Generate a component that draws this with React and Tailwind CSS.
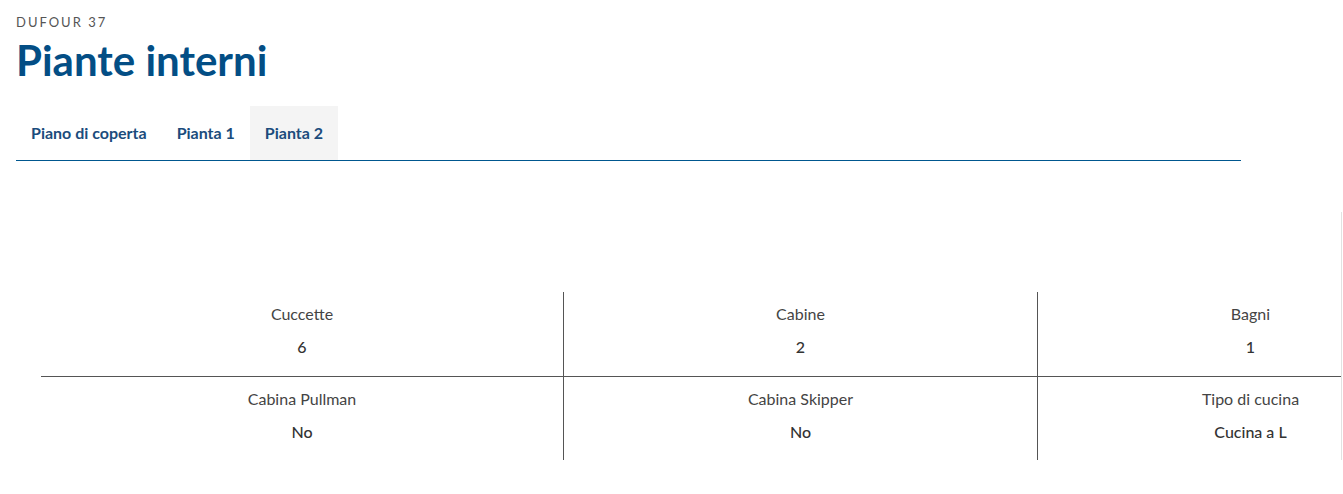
import React from "react";

const specs = [
  [
    { label: "Cuccette", value: "6" },
    { label: "Cabine", value: "2" },
    { label: "Bagni", value: "1" },
  ],
  [
    { label: "Cabina Pullman", value: "No" },
    { label: "Cabina Skipper", value: "No" },
    { label: "Tipo di cucina", value: "Cucina a L" },
  ],
];

const colWidths = ["w-[522px]", "w-[474px]", "w-[426px]"];

export default function App() {
  return (
    <div className="bg-white min-h-[494px] font-['Lato','Open_Sans',sans-serif] overflow-hidden">
      {/* Header */}
      <div className="px-4 pt-[14px]">
        <p className="text-[13px] leading-4 tracking-[2px] text-[#555]">DUFOUR 37</p>
        <h1 className="mt-[6px] text-[42px] leading-[48px] font-bold text-[#034e85]">Piante interni</h1>
      </div>

      {/* Tabs */}
      <div className="ml-4 mt-[22px] w-[1225px] flex border-b border-[#00578f]">
        <button className="h-[54px] px-[15px] text-[16px] font-bold text-[#1b4c7c]">Piano di coperta</button>
        <button className="h-[54px] px-[15px] text-[16px] font-bold text-[#1b4c7c]">Pianta 1</button>
        <button className="h-[54px] px-[15px] text-[16px] font-bold text-[#1b4c7c] bg-[#f4f4f4]">Pianta 2</button>
      </div>

      {/* Specs */}
      <div className="mt-[51px] w-[1342px] border-r border-[#e2e2e2] pt-[80px]">
        <div className="ml-[41px] w-[1300px] overflow-hidden">
          {specs.map((row, i) => (
            <div key={i} className={`flex w-[1422px] ${i === 0 ? "border-b border-[#555]" : ""}`}>
              {row.map((cell, j) => (
                <div
                  key={cell.label}
                  className={`${colWidths[j]} shrink-0 text-center text-[16px] leading-6 text-[#444] pt-[10px] ${i === 0 ? "pb-[17px]" : "pb-4"} ${j > 0 ? "border-l border-[#555]" : ""}`}
                >
                  <p>{cell.label}</p>
                  <p className="mt-[9px] font-medium text-[#333]">{cell.value}</p>
                </div>
              ))}
            </div>
          ))}
        </div>
      </div>
    </div>
  );
}
